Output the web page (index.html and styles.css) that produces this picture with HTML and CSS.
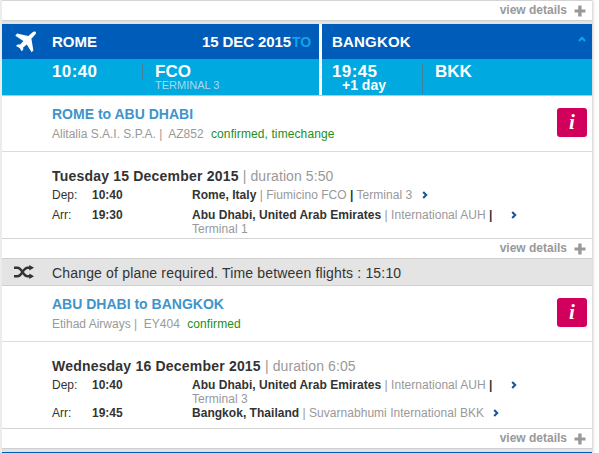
FILE: index.html
```html
<!DOCTYPE html>
<html lang="en">
<head>
    <meta charset="UTF-8">
    <title>Itinerary</title>
    <link rel="stylesheet" href="styles.css">
</head>
<body>
    <svg width="0" height="0" class="sprite">
        <symbol id="plus" viewBox="0 0 12 12"><path d="M4.2 0.5h3.4v3.9h3.9v3.2H7.6v3.9H4.2V7.6H0.5V4.4h3.7z" fill="#999"/></symbol>
        <symbol id="chevron" viewBox="0 0 6 8"><path d="M1.2 1l3 3l-3 3" fill="none" stroke="#1b5596" stroke-width="2.1"/></symbol>
    </svg>

    <div class="panel">
        <div class="view-details first"><a>view details</a><svg width="12" height="12"><use href="#plus"/></svg></div>
        <div class="gap"></div>

        <div class="flight">
            <div class="cities">
                <div class="city-from">
                    <svg class="plane" width="22" height="22" viewBox="0 0 22 22">
                        <path d="M20.700 0.900c.7.9.1 2.100-.9 3.100L16.400 7.700L18.400 19.600L16.600 21.200L11.800 13.500L8.200 16.500L8.200 18.700L6.500 20.300L4.700 17L1 15.100L2.500 13.500L5.200 13.600L8.400 10L0.300 4.700L2.100 2.500L13.300 4.900L17.300 1.500c1.200-1 2.500-1.500 3.400-.6z" fill="#fff"/>
                    </svg>
                    <span class="name">ROME</span>
                    <span class="date">15 DEC 2015</span>
                    <span class="to">TO</span>
                </div>
                <div class="city-to">
                    <span class="name bangkok">BANGKOK</span>
                    <svg class="up" width="8" height="6" viewBox="0 0 8 6"><path d="M0.900 5l3.100-3.200l3.100 3.200" fill="none" stroke="#12a3e6" stroke-width="2"/></svg>
                </div>
            </div>
            <div class="times">
                <div class="time-from">
                    <div class="time">10:40</div>
                    <div class="airport short">FCO<small>TERMINAL 3</small></div>
                </div>
                <div class="time-to">
                    <div class="time">19:45<b>+1 day</b></div>
                    <div class="airport">BKK</div>
                </div>
            </div>
        </div>

        <div class="segment">
            <div>
                <h2>ROME to ABU DHABI</h2>
                <p>Alitalia S.A.I. S.P.A. |&nbsp; AZ852 <span class="status">confirmed, timechange</span></p>
            </div>
            <span class="info">i</span>
        </div>
        <div class="details">
            <h3>Tuesday 15 December 2015 <span>| duration 5:50</span></h3>
            <div class="row">
                <span class="label">Dep:</span><b class="hour">10:40</b>
                <div class="place"><b>Rome, Italy</b> | Fiumicino FCO <b>|</b> Terminal 3<svg class="next" width="6" height="8"><use href="#chevron"/></svg></div>
            </div>
            <div class="row arr">
                <span class="label">Arr:</span><b class="hour">19:30</b>
                <div class="place"><b>Abu Dhabi, United Arab Emirates</b> | International AUH <b>|</b><svg class="next far" width="6" height="8"><use href="#chevron"/></svg><br>Terminal 1</div>
            </div>
        </div>
        <div class="view-details"><a>view details</a><svg width="12" height="12"><use href="#plus"/></svg></div>

        <div class="change">
            <svg width="20" height="14" viewBox="0 0 20 14">
                <g fill="none" stroke="#333" stroke-width="2.400">
                    <path d="M0 2.700h3.500c4.500 0 5.500 8.600 10 8.600h3"/>
                    <path d="M0 11.300h3.500c4.500 0 5.500-8.600 10-8.600h3"/>
                </g>
                <path d="M15.300 0l4.700 2.800l-4.700 2.800zM15.300 8.400l4.700 2.800l-4.700 2.800z" fill="#333"/>
            </svg>
            <span>Change of plane required. Time between flights : 15:10</span>
        </div>

        <div class="segment">
            <div>
                <h2>ABU DHABI to BANGKOK</h2>
                <p>Etihad Airways |&nbsp; EY404 <span class="status">confirmed</span></p>
            </div>
            <span class="info">i</span>
        </div>
        <div class="details">
            <h3>Wednesday 16 December 2015 <span>| duration 6:05</span></h3>
            <div class="row">
                <span class="label">Dep:</span><b class="hour">10:40</b>
                <div class="place"><b>Abu Dhabi, United Arab Emirates</b> | International AUH <b>|</b><svg class="next far" width="6" height="8"><use href="#chevron"/></svg><br>Terminal 3</div>
            </div>
            <div class="row">
                <span class="label">Arr:</span><b class="hour">19:45</b>
                <div class="place"><b>Bangkok, Thailand</b> | Suvarnabhumi International BKK<svg class="next near" width="6" height="8"><use href="#chevron"/></svg></div>
            </div>
        </div>
        <div class="view-details"><a>view details</a><svg width="12" height="12"><use href="#plus"/></svg></div>
        <div class="gap"></div>
        <div class="next-flight"></div>
    </div>
</body>
</html>
```
FILE: styles.css
```css
* {
    box-sizing: border-box;
}

body {
    margin: 0;
    height: 453px;
    overflow: hidden;
    background: #fff;
    font-family: "Liberation Sans", Arial, sans-serif;
    font-size: 12px;
    color: #333;
}

svg {
    display: block;
    flex: none;
}

.sprite {
    position: absolute;
}

h2, h3, p {
    margin: 0;
}

.panel {
    width: 592px;
    height: 453px;
    border-left: 2px solid #ececec;
    box-shadow: 1px 0 3px #ccc;
}

/* view details bar */
.view-details {
    display: flex;
    justify-content: flex-end;
    height: 21px;
    padding: 2px 6px 0 0;
    border-top: 1px solid #d4d4d4;
    border-bottom: 1px solid #cfcfcf;
    font-weight: bold;
    line-height: 14px;
    color: #999;
}

.view-details svg {
    margin: 2px 0 0 7px;
}

.gap {
    height: 3px;
    background: #e2e2e2;
}

/* Blue flight header */
.flight {
    height: 72px;
    border-bottom: 1px solid #a5cfe0;
    color: #fff;
    font-weight: bold;
}

.cities, .times {
    display: flex;
}

.cities {
    height: 35px;
    background: #005cb9;
    font-size: 15px;
    line-height: 36px;
}

.city-from, .time-from {
    display: flex;
    width: 320px;
    border-right: 3px solid #fff;
}

.plane {
    margin: 7px 15px 0 13px;
}

.date {
    margin-left: auto;
    letter-spacing: -0.1px;
}

.to {
    width: 28px;
    padding-left: 1px;
    font-size: 14px;
    color: #12a3e6;
}

.city-to, .time-to {
    display: flex;
    flex: 1;
    padding-left: 10px;
}

.bangkok {
    letter-spacing: 0.2px;
}

.up {
    margin: 12px 6px 0 auto;
}

.times {
    height: 36px;
    background: #00a9e0;
    font-size: 17px;
    line-height: 20px;
}

.time-from {
    padding-left: 50px;
}

.time {
    width: 90px;
    padding-top: 3px;
    letter-spacing: 0.4px;
}

.time b {
    display: block;
    margin: -4px 0 0 10px;
    font-size: 14px;
    line-height: 14px;
    letter-spacing: 0;
}

.airport {
    height: 31px;
    margin-top: 4px;
    padding-left: 12px;
    border-left: 1px solid #3f7f9c;
    line-height: 17px;
}

.airport.short {
    height: 17px;
}

.airport small {
    display: block;
    font-size: 11px;
    font-weight: normal;
    line-height: 10px;
    color: #a9d9ea;
}

/* Flight segment */
.segment {
    display: flex;
    justify-content: space-between;
    height: 56px;
    padding: 10px 5px 0 50px;
    border-bottom: 1px solid #dcdcdc;
}

h2 {
    font-size: 14px;
    line-height: 17px;
    color: #4094cc;
}

.segment p {
    margin-top: 4px;
    line-height: 14px;
    color: #999;
}

.status {
    margin-left: 4px;
    letter-spacing: 0.1px;
    color: #209020;
}

.info {
    width: 30px;
    height: 29px;
    margin-top: 2px;
    border-radius: 3px;
    background: #d0005c;
    color: #fff;
    font: italic bold 21px/28px "Liberation Serif", serif;
    text-align: center;
}

.details {
    height: 86px;
    padding: 16px 0 0 50px;
}

h3 {
    margin-bottom: 3px;
    font-size: 14px;
    line-height: 17px;
    letter-spacing: 0.2px;
}

h3 span {
    font-weight: normal;
    letter-spacing: 0.1px;
    color: #999;
}

.row {
    display: flex;
    line-height: 14px;
}

.row.arr {
    margin-top: 6px;
}

.label {
    width: 40px;
}

.hour {
    width: 100px;
}

.place {
    letter-spacing: 0.03px;
    color: #999;
}

.place b {
    color: #333;
}

.next {
    display: inline-block;
    margin-left: 10px;
}

.next.near {
    margin-left: 9px;
}

.next.far {
    margin-left: 19px;
}

/* Connection notice */
.change {
    display: flex;
    height: 27px;
    padding: 6px 0 0 12px;
    border-bottom: 1px solid #d0d0d0;
    background: #e4e4e4;
    font-size: 14px;
    line-height: 16px;
}

.change span {
    margin-left: 18px;
    letter-spacing: 0.17px;
}

.next-flight {
    height: 1px;
    background: #005cb9;
}
```
